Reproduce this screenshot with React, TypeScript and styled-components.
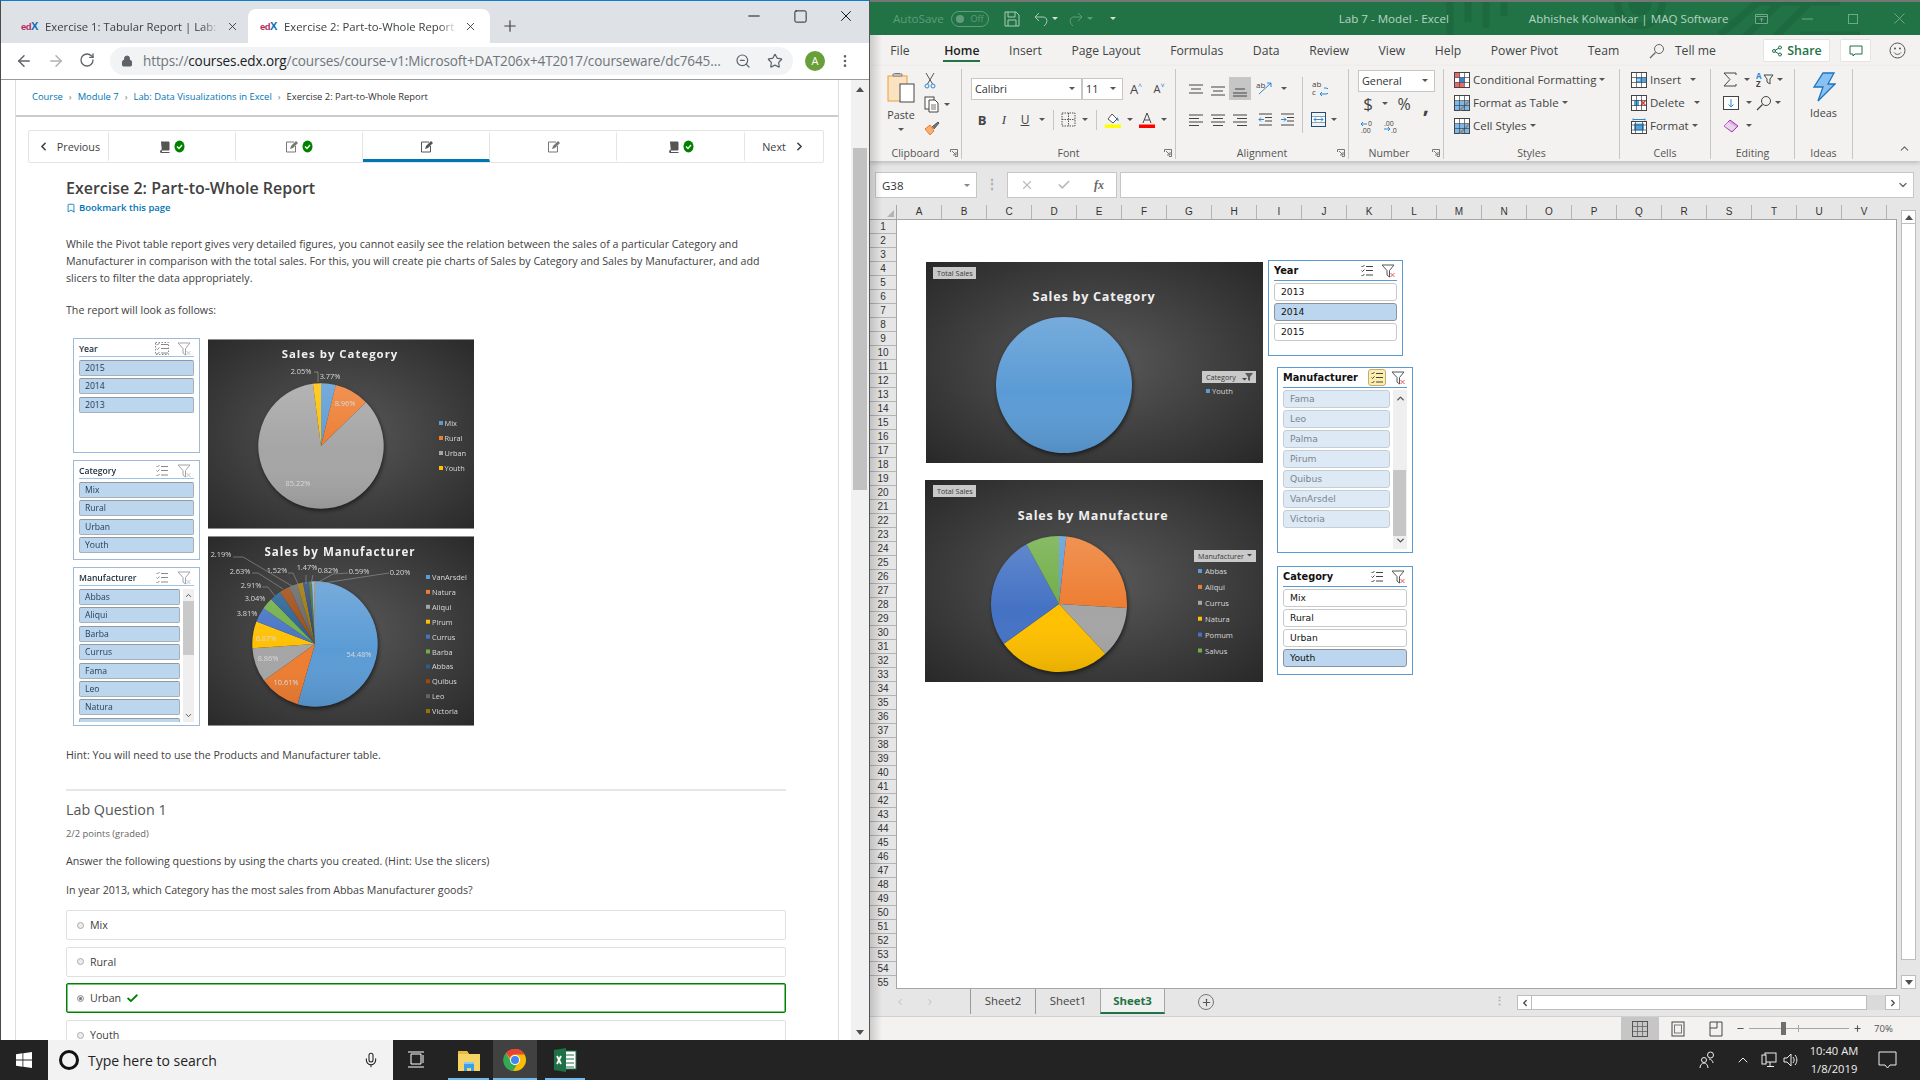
import React from 'react';
import styled, { createGlobalStyle } from 'styled-components';
import { ArrowLeft, ArrowRight, RotateCw, Lock, Star, X, Plus, Minus, Square, MoreVertical, ZoomOut, ChevronLeft, ChevronRight, ChevronUp, ChevronDown, Check, Bookmark, Mic, Share2 } from 'lucide-react';

const Global = createGlobalStyle`
  html, body { margin: 0; padding: 0; width: 1920px; height: 1080px; overflow: hidden; background: #fff; }
  body { font-family: "Open Sans", "Liberation Sans", sans-serif; color: #414141; }
  * { box-sizing: border-box; }
  svg { display: block; flex: none; }
`;

const Desktop = styled.div`
  width: 1920px; height: 1080px; display: grid;
  grid-template-columns: 870px 1050px; grid-template-rows: 1040px 40px; overflow: hidden;
`;

/* ---------- Browser chrome ---------- */
const Browser = styled.section`
  display: flex; flex-direction: column; min-height: 0; overflow: hidden;
  border-top: 1px solid #0a7fd0; border-left: 1px solid #4a4a4a; border-right: 1px solid #555; background: #fff;
`;
const TabStrip = styled.div`
  height: 42px; background: #dee1e6; display: flex; align-items: flex-end; flex: none; color: #333;
`;
const Tab = styled.div<{ $active?: boolean }>`
  width: ${p => (p.$active ? 242 : 247)}px; height: 34px; display: flex; align-items: center;
  padding: 0 ${p => (p.$active ? 13 : 9)}px 0 ${p => (p.$active ? 12 : 20)}px; gap: 7px; border-radius: 8px 8px 0 0;
  background: ${p => (p.$active ? '#fff' : 'transparent')};
`;
const Favicon = styled.span`
  font: 700 9.5px/1 "Liberation Sans", sans-serif; width: 17px; letter-spacing: -.5px; color: #b6275c; flex: none;
  i { font-style: normal; color: #0f6cb5; font-size: 11px; }
`;
const TabTitle = styled.span`
  flex: 1; overflow: hidden; white-space: nowrap; font-size: 11.3px; color: #3c4043;
  -webkit-mask-image: linear-gradient(90deg, #000 90%, transparent 100%);
  mask-image: linear-gradient(90deg, #000 90%, transparent 100%);
`;
const NewTab = styled.span` margin: 0 0 8px 11px; color: #444; `;
const WinButtons = styled.div`
  margin-left: auto; display: flex; align-items: center; align-self: flex-start; padding: 6px 14px 0 0; gap: 29.5px; color: #111;
`;
const Toolbar = styled.div`
  height: 37px; flex: none; display: flex; align-items: center; border-bottom: 1px solid #9a9a9a; padding: 0 13px 1px 14px; background: #fff; color: #5f6368;
`;
const NavIcons = styled.div` display: flex; gap: 14px; width: 95px; `;
const Omnibox = styled.div`
  width: 683px; height: 28px; border-radius: 14px; background: #f1f3f4; display: flex; align-items: center; padding: 0 10px 0 11px; gap: 10px;
`;
const UrlText = styled.span`
  flex: 1; white-space: nowrap; overflow: hidden; font-size: 13.55px; letter-spacing: -.12px; color: #70757a;
  b { font-weight: 400; color: #202124; }
`;
const ZoomSlot = styled.span` margin-right: 6px; display: flex; `;
const Avatar = styled.span`
  width: 20px; height: 20px; border-radius: 50%; background: #689f38; color: #fff; font-size: 11px; display: flex; align-items: center; justify-content: center; margin-left: 12px;
`;
const MenuSlot = styled.span` margin-left: 12px; display: flex; `;

/* ---------- edX page ---------- */
const PageArea = styled.div` flex: 1; display: flex; min-height: 0; overflow: hidden; `;
const PageWrap = styled.div` width: 850px; padding: 0 12px 0 14px; overflow: hidden; flex: none; `;
const Article = styled.div`
  height: 100%; border-left: 1px solid #ddd; border-right: 1px solid #ddd; overflow: hidden; font-size: 10.67px;
`;
const Breadcrumbs = styled.nav`
  height: 37px; border-bottom: 2px solid #ccc; display: flex; align-items: center; padding: 0 0 3px 16px; font-size: 9.4px; color: #0075b4;
  em { font-style: normal; color: #777; margin: 0 6px; }
  strong { font-weight: 400; color: #333; }
`;
const SeqNav = styled.div`
  margin: 13px 14px 0 12px; height: 33px; display: flex; border: 1px solid #e4e4e4; border-radius: 2px;
`;
const SeqCell = styled.div<{ $w: number; $active?: boolean; $gap?: number }>`
  width: ${p => p.$w}px; border-right: 1px solid #e4e4e4; display: flex; align-items: center; justify-content: center; gap: ${p => p.$gap || 4}px; font-size: 10.8px; color: #414141;
  border-top: 3px solid transparent;
  border-bottom: 3px solid ${p => (p.$active ? '#0075b4' : 'transparent')};
  &:last-child { border-right: 0; }
`;
const Prose = styled.div` padding: 0 52px 0 50px; `;
const H1 = styled.h1`
  margin: 13px 0 0; font-size: 16px; line-height: 24px; font-weight: 600; color: #414141;
`;
const BookmarkLink = styled.div`
  margin-top: 1px; display: flex; align-items: center; gap: 3px; font-size: 9.5px; font-weight: 600; line-height: 14px; color: #0075b4;
`;
const P = styled.p<{ $t: number }>`
  margin: ${p => p.$t}px 0 0; line-height: 17px; white-space: pre-line; color: #414141;
`;
const Rule = styled.div` height: 2px; background: #e6e6e6; margin-top: 25px; `;
const H3 = styled.h3` margin: 9px 0 0; font-size: 14.3px; line-height: 20px; font-weight: 400; color: #555; `;
const Points = styled.div` margin-top: 8px; font-size: 9.4px; line-height: 12px; color: #666; `;
const Choices = styled.div` margin-top: 11px; display: flex; flex-direction: column; gap: 6.7px; `;
const Choice = styled.div<{ $ok?: boolean }>`
  height: 30px; flex: none; border: ${p => (p.$ok ? '1px solid #008100' : '1px solid #e0e0e0')}; box-shadow: ${p => (p.$ok ? 'inset 0 0 0 .5px #008100' : 'none')}; border-radius: 2px; display: flex; align-items: center; padding-left: 10px; gap: 6px; font-size: 10.67px; color: #414141;
`;
const Radio = styled.span<{ $on?: boolean }>`
  width: 7px; height: 7px; border-radius: 50%; border: 1px solid #aaa; background: ${p => (p.$on ? '#777' : '#ececec')}; box-shadow: ${p => (p.$on ? 'inset 0 0 0 1px #eee' : 'none')};
`;
const CheckMark = styled.span` margin-left: -1px; display: flex; `;
const PageScroll = styled.div` flex: 1; background: #f1f1f1; display: flex; flex-direction: column; align-items: center; justify-content: space-between; padding: 7px 0 5px; position: relative; `;
const Thumb = styled.div` position: absolute; left: 2px; right: 2px; top: 68px; height: 342px; background: #c1c1c1; `;
const Tri = styled.span<{ $d: 'up' | 'down' }>`
  width: 0; height: 0; border-left: 4px solid transparent; border-right: 4px solid transparent;
  ${p => (p.$d === 'up' ? 'border-bottom: 5px solid #505050;' : 'border-top: 5px solid #505050;')}
`;

/* picture embedded in the lab page */
const Picture = styled.div`
  margin: 19px 0 0 7px; display: grid; grid-template-columns: 127px 266px; column-gap: 8px; filter: blur(.35px); width: 401px;
`;
const PicColumn = styled.div` display: flex; flex-direction: column; gap: 7px; height: 388px; `;
const PicCharts = styled.div` display: flex; flex-direction: column; gap: 7px; padding-top: 1px; `;
const PicSlicer = styled.div<{ $h: number }>`
  height: ${p => p.$h}px; border: 1px solid #9dbbd9; padding: 0 5px; background: #fff; overflow: hidden;
`;
const PicHead = styled.div`
  height: 18px; padding: 2px 2px 0 0; border-bottom: 1px solid #9dc3e6; display: flex; align-items: center; gap: 8px; font-size: 8.6px; font-weight: 600; color: #1c2b39;
`;
const PicTitle = styled.div` flex: 1; `;
const PicBody = styled.div` display: flex; gap: 3px; margin-top: 3px; height: 133px; `;
const PicList = styled.div` flex: 1; display: flex; flex-direction: column; gap: 2.4px; overflow: hidden; `;
const PicItem = styled.div`
  height: 16px; flex: none; background: #bcd6ee; border: 1px solid #a4b0bb; border-top-color: #8e99a3; border-radius: 2px; font-size: 8.6px; line-height: 14px; padding-left: 5px; color: #1d3a55; font-weight: 500;
`;
const PicBar = styled.div`
  width: 11px; background: #efefef; position: relative; display: flex; flex-direction: column; justify-content: space-between; align-items: center; color: #555; padding: 2px 0;
`;
const PicBarThumb = styled.div` position: absolute; left: 0; right: 0; top: 12px; height: 54px; background: #c9c9c9; `;
const PicChartFrame = styled.div`
  width: 266px; height: 190px; background: radial-gradient(ellipse at center, #595959 0%, #2a2a2a 100%); border: 1px solid #8e8e8e; border-width: 1px 0;
`;

/* ---------- Excel ---------- */
const Excel = styled.section`
  position: relative; display: flex; flex-direction: column; min-height: 0; overflow: hidden; background: #e6e6e6;
  &::after { content: ""; position: absolute; left: 0; top: 35px; bottom: 0; width: 12px; background: linear-gradient(90deg, rgba(0,0,0,.16), rgba(0,0,0,0)); pointer-events: none; z-index: 3; }
`;
const TitleBar = styled.div`
  height: 35px; flex: none; background: #217346; border-top: 2px solid #767676; display: flex; align-items: center; position: relative; color: #b7d3c3; font-size: 11.6px; white-space: nowrap; overflow: hidden;
`;
const TitleDecor = styled.svg` position: absolute; right: 60px; top: 0; `;
const TitleItem = styled.div<{ $ml: number; $dim?: boolean }>`
  position: relative; margin-left: ${p => p.$ml}px; display: flex; align-items: center; color: ${p => (p.$dim ? '#5f9c7c' : 'inherit')};
`;
const Toggle = styled.span`
  width: 38px; height: 16px; border: 1px solid #5f9c7c; border-radius: 8px; display: flex; align-items: center; justify-content: space-between; padding: 0 4px 0 4px; font-size: 9px; color: #5f9c7c;
  i { width: 8px; height: 8px; border-radius: 50%; background: #5f9c7c; }
`;
const SmallCaret = styled.span<{ $c?: string; $ml?: number; $mr?: number; $mt?: number }>`
  width: 0; height: 0; flex: none; display: inline-block; margin: ${p => p.$mt || 0}px ${p => p.$mr || 0}px 0 ${p => p.$ml || 0}px;
  border-left: 3px solid transparent; border-right: 3px solid transparent; border-top: 3px solid ${p => p.$c || '#555'};
`;
const TabRow = styled.div`
  height: 31px; flex: none; background: #f3f2f1; display: flex; align-items: stretch; padding-left: 5.5px; font-size: 12.2px; color: #444; position: relative;
`;
const RTab = styled.div<{ $active?: boolean }>`
  display: flex; align-items: center; padding: 0 14.8px; position: relative; white-space: nowrap;
  color: ${p => (p.$active ? '#222' : '#444')}; font-weight: ${p => (p.$active ? 600 : 400)};
  ${p => p.$active && `margin-left: 5px; &::after { content: ""; position: absolute; left: 14px; right: 14px; bottom: 4px; height: 2px; background: #217346; }`}
`;
const TellMe = styled.span` margin-left: 10px; `;
const TabRight = styled.div` margin-left: auto; display: flex; align-items: center; padding-right: 14px; gap: 10px; `;
const ShareBtn = styled.div`
  width: 67px; height: 23px; background: #fff; border: 1px solid #e4e4e4; border-radius: 2px; display: flex; align-items: center; justify-content: center; gap: 4px; color: #217346; font-weight: 600; font-size: 12.4px;
`;
const CommentBtn = styled.div`
  width: 31px; height: 23px; background: #fff; border: 1px solid #e4e4e4; border-radius: 2px; display: flex; align-items: center; justify-content: center; margin-right: 8px;
`;
const Ribbon = styled.div`
  height: 95px; flex: none; background: #f3f2f1; display: flex; padding-top: 3px; box-shadow: 0 2px 4px rgba(0,0,0,.18); position: relative; z-index: 1; font-size: 11.5px; color: #444;
`;
const Group = styled.div<{ $w: number }>`
  width: ${p => p.$w}px; height: 90px; border-right: 1px solid #c8c6c4; flex: none; display: flex; flex-direction: column; position: relative;
`;
const GroupBody = styled.div<{ $pl?: number; $col?: boolean }>`
  height: 78px; flex: none; display: flex; flex-direction: ${p => (p.$col ? 'column' : 'row')}; padding-left: ${p => p.$pl || 0}px;
`;
const GroupLabel = styled.div<{ $pr?: number }>`
  height: 13px; text-align: center; font-size: 10.6px; line-height: 13px; color: #555; padding-right: ${p => p.$pr || 0}px;
`;
const Launcher = styled.svg` position: absolute; right: 3px; bottom: 2px; `;
const RRow = styled.div<{ $h?: number; $t?: number }>`
  display: flex; align-items: center; height: ${p => p.$h || 23}px; margin-top: ${p => p.$t || 0}px; white-space: nowrap;
`;
const Slot = styled.div<{ $w: number; $on?: boolean; $ml?: number }>`
  width: ${p => p.$w}px; height: 23px; flex: none; display: flex; align-items: center; justify-content: center; margin-left: ${p => p.$ml || 0}px; background: ${p => (p.$on ? '#c6c6c6' : 'transparent')};
`;
const VLine = styled.div<{ $h?: number; $m?: number; $t?: number; $l?: number }>`
  width: 1px; height: ${p => p.$h || 20}px; background: #c8c6c4; margin: ${p => p.$t || 0}px ${p => p.$m ?? 4}px 0 ${p => p.$l ?? p.$m ?? 4}px; flex: none;
`;
const FieldBox = styled.div<{ $w: number; $pl?: number }>`
  width: ${p => p.$w}px; height: 22px; background: #fff; border: 1px solid #c8c6c4; display: flex; align-items: center; justify-content: space-between; padding: 0 6px 0 ${p => p.$pl ?? 3}px; font-size: 10.8px; color: #333; flex: none;
`;
const BigLabel = styled.div<{ $t?: number }>` text-align: center; font-size: 10.8px; line-height: 14px; margin-top: ${p => p.$t || 0}px; `;
const StackCol = styled.div<{ $w?: number; $ml?: number; $start?: boolean; $pt?: number }>`
  display: flex; flex-direction: column; align-items: ${p => (p.$start ? 'flex-start' : 'center')}; ${p => (p.$w ? `width: ${p.$w}px;` : '')} margin-left: ${p => p.$ml || 0}px; padding-top: ${p => p.$pt || 0}px; flex: none;
`;
const GrowA = styled.span<{ $s: number }>`
  font-size: ${p => p.$s}px; color: #444;
  sup { font-size: 7px; color: #2b88d8; line-height: 0; }
`;
const GlyphB = styled.b` font-size: 13px; `;
const GlyphI = styled.i` font-size: 13px; font-family: "Liberation Serif", serif; `;
const GlyphU = styled.u` font-size: 12px; `;
const NumGlyph = styled.span<{ $s?: number }>` font-size: ${p => p.$s || 16}px; `;
const CommaGlyph = styled.b` font-size: 22px; line-height: 14px; `;
const StyleRows = styled.div` display: flex; flex-direction: column; margin-top: -1px; `;
const StyleRow = styled.div`
  height: 23px; display: flex; align-items: center; gap: 3px; white-space: nowrap;
`;
const RibbonEnd = styled.div` flex: 1; display: flex; justify-content: flex-end; align-items: flex-end; padding: 0 9px 6px 0; color: #666; `;

const FormulaRow = styled.div`
  height: 44px; flex: none; padding: 11px 6px 0 5px; display: flex; align-items: flex-start; background: #e6e6e6;
`;
const NameBox = styled.div`
  width: 102px; height: 26px; background: #fff; border: 1px solid #c8c6c4; display: flex; align-items: center; justify-content: space-between; padding: 0 6px; font-size: 11.5px; color: #333;
`;
const Dots = styled.div` width: 30px; color: #aaa; text-align: center; font-size: 12px; line-height: 24px; font-weight: 700; `;
const FxBox = styled.div`
  width: 110px; height: 26px; background: #fff; border: 1px solid #c8c6c4; display: flex; align-items: center; justify-content: space-between; padding: 0 12px; margin-right: 3px; color: #bbb;
  i { font: italic 700 12px "Liberation Serif", serif; color: #666; }
`;
const Formula = styled.div`
  flex: 1; height: 26px; background: #fff; border: 1px solid #c8c6c4; display: flex; align-items: center; justify-content: flex-end; padding-right: 4px; color: #666;
`;
const SheetGrid = styled.div`
  flex: 1; display: grid; grid-template-columns: 27px 1000px 23px; grid-template-rows: 15px 1fr; min-height: 0; overflow: hidden; background: #e6e6e6;
`;
const Corner = styled.div` background: #e6e6e6; border-right: 1px solid #a6a6a6; border-bottom: 1px solid #a6a6a6; position: relative;
  &::after { content: ""; position: absolute; right: 2px; bottom: 2px; border-left: 7px solid transparent; border-bottom: 7px solid #b4b4b4; }
`;
const ColHeads = styled.div` display: flex; background: #e6e6e6; border-bottom: 1px solid #a6a6a6; `;
const ColHead = styled.div`
  width: 45px; flex: none; border-right: 1px solid #b4b4b4; text-align: center; font: 10px/14px "Liberation Sans", sans-serif; color: #333;
`;
const RowHeads = styled.div` background: #e6e6e6; border-right: 1px solid #a6a6a6; overflow: hidden; `;
const RowHead = styled.div`
  height: 14px; border-bottom: 1px solid #b4b4b4; text-align: center; font: 10px/13px "Liberation Sans", sans-serif; color: #333;
`;
const Sheet = styled.div` position: relative; background: #fff; border-right: 1px solid #a6a6a6; border-bottom: 1px solid #a6a6a6; `;
const VScroll = styled.div`
  grid-row: 1 / 3; grid-column: 3; padding: 5px 4px 0 4px; display: flex; flex-direction: column; align-items: center;
`;
const ScrollBtn = styled.div`
  width: 15px; height: 14px; background: #fff; border: 1px solid #bdbdbd; display: flex; align-items: center; justify-content: center; flex: none;
`;
const VThumb = styled.div` width: 15px; flex: 1; background: #fff; border: 1px solid #bdbdbd; border-top: 0; margin-bottom: 15px; `;

const ChartBox = styled.div<{ $x: number; $y: number; $w: number; $h: number }>`
  position: absolute; left: ${p => p.$x}px; top: ${p => p.$y}px; width: ${p => p.$w}px; height: ${p => p.$h}px;
  background: radial-gradient(ellipse at center, #5a5a5a 0%, #282828 100%);
`;
const SlicerBox = styled.div<{ $x: number; $y: number; $w: number; $h: number }>`
  position: absolute; left: ${p => p.$x}px; top: ${p => p.$y}px; width: ${p => p.$w}px; height: ${p => p.$h}px;
  border: 1px solid #5b9bd5; background: #fff; padding: 0 5px;
`;
const SlicerHead = styled.div`
  height: 20px; border-bottom: 1px solid #5b9bd5; display: flex; align-items: center; font: 700 9.8px "DejaVu Sans", sans-serif; color: #111;
`;
const SlicerTitle = styled.div` flex: 1; `;
const SlicerBody = styled.div` display: flex; gap: 3px; margin-top: 2px; height: 159px; `;
const SlicerList = styled.div` flex: 1; display: flex; flex-direction: column; gap: 2px; `;
const SlicerItem = styled.div<{ $s?: 'on' | 'dim' }>`
  height: 18px; flex: none; border-radius: 3px; padding-left: 6px; font: 9.2px/16px "DejaVu Sans", sans-serif;
  background: ${p => (p.$s === 'on' ? '#bbd6ee' : p.$s === 'dim' ? '#dde9f4' : '#fff')};
  border: 1px solid ${p => (p.$s === 'on' ? '#8d9499' : p.$s === 'dim' ? '#c5ced6' : '#c9c9c9')};
  color: ${p => (p.$s === 'dim' ? '#7b8690' : '#111')};
`;
const SlicerBar = styled.div`
  width: 14px; background: #efefef; position: relative; display: flex; flex-direction: column; justify-content: space-between; align-items: center; padding: 3px 0; color: #555;
`;
const SlicerBarThumb = styled.div` position: absolute; left: 0; right: 1px; top: 80px; height: 66px; background: #c6c6c6; `;
const IconBtn = styled.span<{ $on?: boolean; $mr?: number }>`
  width: 18px; height: 17px; display: flex; align-items: center; justify-content: center; border-radius: 3px; margin-right: ${p => p.$mr || 0}px;
  ${p => p.$on && 'background: #fdeeae; border: 1px solid #c4ad6e;'}
`;

const SheetBar = styled.div`
  height: 27px; flex: none; background: #e6e6e6; display: flex; align-items: flex-start; font-size: 11.4px; color: #444;
`;
const SheetNav = styled.div` width: 100px; height: 25px; display: flex; align-items: center; gap: 20px; padding-left: 25px; color: #b5b5b5; `;
const SheetTab = styled.div<{ $on?: boolean }>`
  width: 65px; height: 25px; text-align: center; line-height: 24px; border-left: 1px solid ${p => (p.$on ? '#a6a6a6' : '#9a9a9a')};
  ${p => p.$on && 'background: #f0f0f0; color: #217346; font-weight: 700; border-bottom: 2px solid #217346; border-right: 1px solid #a6a6a6;'}
`;
const AddSheet = styled.div`
  width: 16px; height: 16px; margin: 5px 0 0 33px; border: 1px solid #777; border-radius: 50%; color: #555; display: flex; align-items: center; justify-content: center;
`;
const HDots = styled.div` margin-left: 280px; color: #aaa; font-weight: 700; line-height: 23px; width: 23px; `;
const HScroll = styled.div` display: flex; height: 15px; width: 383px; margin-top: 6px; background: #dadada; `;
const HBtn = styled.div` width: 15px; background: #fff; border: 1px solid #bdbdbd; display: flex; align-items: center; justify-content: center; color: #444; `;
const HThumb = styled.div` width: 335px; background: #fff; border: 1px solid #bdbdbd; border-left: 0; `;
const HGap = styled.div` flex: 1; `;
const StatusBar = styled.div`
  height: 24px; flex: none; background: #f3f2f1; border-top: 1px solid #d0d0d0; display: flex; align-items: stretch; justify-content: flex-end; padding-right: 27px; color: #555; font-size: 9.6px;
`;
const ViewBtn = styled.div<{ $on?: boolean; $mr?: number }>`
  width: 38px; display: flex; align-items: center; justify-content: center; margin-right: ${p => p.$mr || 0}px; background: ${p => (p.$on ? '#c6c6c6' : 'transparent')};
`;
const ZoomSign = styled.span` align-self: center; display: flex; `;
const ZoomSlider = styled.div`
  width: 100px; height: 1px; background: #a6a6a6; align-self: center; position: relative; margin: 0 4px;
  &::before { content: ""; position: absolute; left: 32px; top: -6px; width: 5px; height: 13px; background: #6e6e6e; }
  &::after { content: ""; position: absolute; left: 49px; top: -3px; width: 1px; height: 7px; background: #a6a6a6; }
`;
const ZoomPct = styled.div` align-self: center; margin-left: 12px; `;

/* ---------- Taskbar ---------- */
const Taskbar = styled.footer`
  grid-column: 1 / 3; background: #232323; display: flex; align-items: stretch; color: #fff;
`;
const StartBtn = styled.div` width: 48px; display: flex; align-items: center; justify-content: center; `;
const SearchBox = styled.div`
  width: 345px; background: #f2f2f2; display: flex; align-items: center; padding: 0 14px 0 11px; gap: 9px; color: #222; font-size: 14px;
  span { flex: 1; }
`;
const Cortana = styled.i` width: 20px; height: 20px; border: 3px solid #111; border-radius: 50%; `;
const TaskIcon = styled.div<{ $w: number; $on?: boolean; $run?: boolean; $ml?: number }>`
  width: ${p => p.$w}px; margin-left: ${p => p.$ml || 0}px; display: flex; align-items: center; justify-content: center; position: relative;
  background: ${p => (p.$on ? '#414141' : 'transparent')};
  ${p => p.$run && `&::after { content: ""; position: absolute; left: 0; right: 0; bottom: 0; height: 2px; background: #76b9ed; }`}
`;
const Tray = styled.div` margin-left: auto; display: flex; align-items: center; color: #eee; padding-right: 23px; `;
const TrayIcon = styled.div<{ $ml?: number }>` margin-left: ${p => p.$ml || 0}px; display: flex; `;
const Clock = styled.div` width: 60px; margin-left: 5px; text-align: center; font-size: 11.2px; line-height: 18px; `;

/* ---------- Chart helpers ---------- */
const pt = (cx: number, cy: number, r: number, pct: number) => {
  const a = (pct / 100) * 2 * Math.PI;
  return [cx + r * Math.sin(a), cy - r * Math.cos(a)];
};
const arc = (cx: number, cy: number, r: number, a: number, b: number) => {
  const [x1, y1] = pt(cx, cy, r, a);
  const [x2, y2] = pt(cx, cy, r, b);
  if (b - a >= 99.99) return `M${cx} ${cy - r}A${r} ${r} 0 1 1 ${cx - 0.01} ${cy - r}Z`;
  return `M${cx} ${cy}L${x1} ${y1}A${r} ${r} 0 ${b - a > 50 ? 1 : 0} 1 ${x2} ${y2}Z`;
};
const PieGroup = styled.g` filter: drop-shadow(1px 2px 2px rgba(0,0,0,.55)); `;
const Pie = ({ cx, cy, r, slices, id }: { cx: number; cy: number; r: number; slices: [number, string][]; id: string }) => {
  let acc = 0;
  return (
    <PieGroup>
      <defs>
        <linearGradient id={id} x1="0" y1="0" x2="0" y2="1">
          <stop offset="0" stopColor="#fff" stopOpacity=".17" />
          <stop offset=".55" stopColor="#fff" stopOpacity="0" />
          <stop offset="1" stopColor="#000" stopOpacity=".09" />
        </linearGradient>
      </defs>
      {slices.map(([v, c], i) => {
        const d = arc(cx, cy, r, acc, acc + v);
        acc += v;
        return <path key={i} d={d} fill={c} />;
      })}
      <circle cx={cx} cy={cy} r={r} fill={`url(#${id})`} />
    </PieGroup>
  );
};
const T = styled.text<{ $s: number; $c?: string; $w?: number; $ls?: number }>`
  font-family: "Open Sans", "Liberation Sans", sans-serif; font-size: ${p => p.$s}px; fill: ${p => p.$c || '#d9d9d9'};
  font-weight: ${p => p.$w || 400}; letter-spacing: ${p => p.$ls || 0}px; dominant-baseline: central;
`;
const Label = ({ x, y, children, c, s = 7.4 }: any) => <T x={x} y={y} $s={s} $c={c} textAnchor="middle">{children}</T>;
const Legend = ({ x, y, step, items, s = 7.4, tx = 4.5, box = 4 }: any) => (
  <g>
    {items.map(([n, c]: [string, string], i: number) => (
      <g key={n}>
        <rect x={x} y={y + i * step - box / 2} width={box} height={box} fill={c} />
        <T x={x + tx} y={y + i * step} $s={s}>{n}</T>
      </g>
    ))}
  </g>
);

const C = { blue: '#5b9bd5', orange: '#ed7d31', gray: '#a5a5a5', gold: '#ffc000', dblue: '#4472c4', green: '#70ad47', navy: '#255e91', rust: '#9e480e', dgray: '#636363', olive: '#997300' };

const PicCategory = () => (
  <svg width="266" height="188" viewBox="0 0 266 188">
    <T x="132" y="13" $s={11.4} $w={700} $ls={1} $c="#f0f0f0" textAnchor="middle">Sales by Category</T>
    <Pie id="pa" cx={113} cy={106} r={62.7} slices={[[3.77, C.blue], [8.96, C.orange], [85.22, C.gray], [2.05, C.gold]]} />
    <path d="M106 32h4v10" stroke="#aaa" strokeWidth=".6" fill="none" />
    <Label x={93} y={31}>2.05%</Label>
    <Label x={122} y={36}>3.77%</Label>
    <Label x={137} y={63}>8.96%</Label>
    <Label x={90} y={143}>85.22%</Label>
    <Legend x={231} y={83} step={15} tx={5.5} items={[['Mix', C.blue], ['Rural', C.orange], ['Urban', C.gray], ['Youth', C.gold]]} />
  </svg>
);
const PicManufacturer = () => {
  const lines = ['M25 20h10L84 49', 'M44 36h6L75 52', 'M54 50h6L67 59', 'M80 36h5L90 47', 'M98 38v9', 'M105 38l-2 9', 'M140 36L125 37L105 48', 'M181 36L109 47'];
  const labels: [string, number, number][] = [['2.19%', 13, 18], ['2.63%', 32, 35], ['2.91%', 43, 49], ['3.04%', 47, 62], ['3.81%', 39, 77], ['6.87%', 58, 102], ['8.86%', 60, 122], ['10.61%', 78, 146], ['54.48%', 151, 118], ['1.52%', 69, 34], ['1.47%', 99, 31], ['0.82%', 120, 34], ['0.59%', 151, 35], ['0.20%', 192, 36]];
  return (
    <svg width="266" height="188" viewBox="0 0 266 188">
      <T x="132" y="14" $s={11.6} $w={700} $ls={1} $c="#f0f0f0" textAnchor="middle">Sales by Manufacturer</T>
      <Pie id="pb" cx={107} cy={107} r={62.7} slices={[[54.48, C.blue], [10.61, C.orange], [8.86, C.gray], [6.87, C.gold], [3.81, C.dblue], [3.04, C.green], [2.91, C.navy], [2.63, C.rust], [2.19, C.dgray], [1.52, C.olive], [1.47, '#264478'], [0.82, '#43682b'], [0.59, '#7cafdd'], [0.2, '#f1975a']]} />
      {lines.map(d => <path key={d} d={d} stroke="#9a9a9a" strokeWidth=".6" fill="none" />)}
      {labels.map(([t, x, y]) => <Label key={t} x={x} y={y - 1}>{t}</Label>)}
      <Legend x={218} y={40} step={14.9} tx={6} items={[['VanArsdel', C.blue], ['Natura', C.orange], ['Aliqui', C.gray], ['Pirum', C.gold], ['Currus', C.dblue], ['Barba', C.green], ['Abbas', C.navy], ['Quibus', C.rust], ['Leo', C.dgray], ['Victoria', C.olive]]} />
    </svg>
  );
};
const ChartButton = ({ x, y, w, children, filter }: any) => (
  <g>
    <rect x={x} y={y} width={w} height={12} fill="#c9c9c9" />
    <T x={x + 4} y={y + 6} $s={7.2} $c="#3a3a3a">{children}</T>
    {filter === true && <path d={`M${x + w - 11} ${y + 2}h8l-3 4v4l-2-1v-3z`} fill="#5a5a5a" />}
    {filter !== undefined && <path d={`M${x + w - (filter ? 14 : 9)} ${y + (filter ? 7 : 4)}h5l-2.500 2.500z`} fill="#444" />}
  </g>
);
const SheetCategory = () => (
  <svg width="337" height="201" viewBox="0 0 337 201">
    <ChartButton x={7} y={5} w={43}>Total Sales</ChartButton>
    <T x="168" y="34" $s={12.6} $w={700} $ls={.75} $c="#efefef" textAnchor="middle">Sales by Category</T>
    <Pie id="sa" cx={138} cy={123} r={68} slices={[[100, C.blue]]} />
    <ChartButton x={276} y={109} w={54} filter>Category</ChartButton>
    <Legend x={280} y={129} step={0} tx={6} s={7.6} items={[['Youth', C.blue]]} />
  </svg>
);
const SheetManufacturer = () => (
  <svg width="338" height="202" viewBox="0 0 338 202">
    <ChartButton x={8} y={5} w={43}>Total Sales</ChartButton>
    <T x="168" y="35" $s={12.5} $w={700} $ls={.8} $c="#efefef" textAnchor="middle">Sales by Manufacture</T>
    <Pie id="sb" cx={134} cy={124} r={68} slices={[[1.72, C.blue], [24.2, C.orange], [12.15, C.gray], [27, C.gold], [27, C.dblue], [7.93, C.green]]} />
    <ChartButton x={269} y={70} w={62} filter={false}>Manufacturer</ChartButton>
    <Legend x={273} y={91} step={15.9} tx={7} s={7.6} items={[['Abbas', C.blue], ['Aliqui', C.orange], ['Currus', C.gray], ['Natura', C.gold], ['Pomum', C.dblue], ['Salvus', C.green]]} />
  </svg>
);

/* ---------- Small icons ---------- */
const S = ({ w = 16, h = 16, vb, children }: any) => <svg width={w} height={h} viewBox={vb || `0 0 ${w} ${h}`} fill="none">{children}</svg>;
const Lines = ({ ys, xs }: { ys: number[]; xs: [number, number][] }) => (
  <S>{ys.map((y, i) => <path key={i} d={`M${xs[i][0]} ${y}H${xs[i][1]}`} stroke="#444" />)}</S>
);
const BookIco = () => <S w={11} h={12}><path d="M2 1h8v8H3a1.5 1.5 0 0 0 0 3h7v-1H3" fill="#555" stroke="#555" /><path d="M3 10.5h7" stroke="#fff" /></S>;
const EditIco = ({ c = '#777' }: any) => <S w={13} h={13}><path d="M9 2H1.5v10h9V6" stroke={c} /><path d="M5 9l1-3 5-5 2 2-5 5z" fill={c} /></S>;
const Ok = () => <S w={11} h={13}><ellipse cx="5.5" cy="6.5" rx="5" ry="6" fill="#008100" /><path d="M3 6.5l2 2 3-3.5" stroke="#fff" strokeWidth="1.3" /></S>;
const MultiIco = ({ c = '#444', dotted }: any) => (
  <S w={14} h={13}>
    {dotted && <rect x=".5" y=".5" width="13" height="12" stroke={c} strokeDasharray="1.5 1.5" />}
    <path d="M1.5 2l1 1 2-2M1.5 6.500l1 1 2-2M1.500 11l1 1 2-2" stroke={c} />
    <path d="M6 2.500h7M6 6.500h7M6 11h7" stroke={c} />
  </S>
);
const ClearIco = ({ c = '#555', x = '#e55' }: any) => (
  <S w={15} h={14}><path d="M1 1h12L8.500 6.500V13L6 11V6.500z" stroke={c} /><path d="M9.500 9l4 4M13.500 9l-4 4" stroke={x} /></S>
);
const PasteIco = () => (
  <S w={28} h={31}>
    <rect x="1" y="4" width="19" height="25" fill="#fbe3c2" stroke="#ed9c3f" />
    <path d="M6 4h9V2H6zM8 1.500h5" stroke="#777" fill="#fff" />
    <rect x="13" y="12" width="14" height="18" fill="#fff" stroke="#444" />
  </S>
);
const ScissorIco = () => (
  <S w={12} h={17}><path d="M2 1l6.500 11M10 1L3.500 12" stroke="#555" /><circle cx="3" cy="14" r="2" stroke="#2b88d8" /><circle cx="9" cy="14" r="2" stroke="#2b88d8" /></S>
);
const CopyIco = () => (
  <S w={16} h={17}><rect x="1" y="1" width="9" height="12" fill="#fff" stroke="#444" /><path d="M5 4h6l3 3v9H5z" fill="#fff" stroke="#444" /><path d="M7 9h5M7 11h5M7 13h5" stroke="#777" /></S>
);
const BrushIco = () => (
  <S w={16} h={16}><path d="M1 9l5-4 4 6-4 4z" fill="#f7b076" stroke="#e87f27" /><path d="M8 7l6-5 1 1-5 6" fill="#777" stroke="#555" /></S>
);
const BorderIco = () => <S w={15} h={15}><path d="M1 1h13v13H1zM7.500 1v13M1 7.500h13" stroke="#555" strokeDasharray="1.500 1" /></S>;
const FillIco = () => (
  <S w={16} h={16}><path d="M3 7l4-5 5 5-4 4z" fill="#fff" stroke="#555" /><path d="M12 5c2 2 2 4 1 4s-1-2-1-4z" fill="#2b88d8" /><rect y="12.500" width="16" height="3.500" fill="#ffff00" /></S>
);
const ColorA = () => <S w={16} h={16}><path d="M4 11L8 1l4 10M5.500 8h5" stroke="#444" /><rect y="12.500" width="16" height="3.500" fill="#f00" /></S>;
const OrientIco = () => <S w={18} h={16}><path d="M3 13L15 2M11 2h4v4" stroke="#2b88d8" /><text x="0" y="7" fontSize="8" fill="#444" fontFamily="Open Sans">ab</text></S>;
const IndentIco = ({ rev }: any) => (
  <S w={15} h={13}><path d="M1 1h13M7 4.500h7M7 8h7M1 12h13" stroke="#444" /><path d={rev ? 'M6 6.500H1M3 4.500L1 6.500l2 2' : 'M1 6.500h5M4 4.500l2 2-2 2'} stroke="#2b88d8" /></S>
);
const WrapIco = () => (
  <S w={17} h={17}><path d="M13 8h2a2.500 2.500 0 0 1 0 6H9M11 12l-2 2 2 2" stroke="#2b88d8" /><text x="1" y="7" fontSize="8" fill="#444" fontFamily="Open Sans">ab</text><text x="1" y="15" fontSize="8" fill="#444" fontFamily="Open Sans">c</text></S>
);
const MergeIco = () => (
  <S w={15} h={15}><rect x=".5" y=".5" width="14" height="14" stroke="#1f4e79" /><path d="M.5 5h14M.5 10h14" stroke="#1f4e79" /><rect x="1" y="5" width="13" height="5" fill="#fff" /><path d="M3 7.500h9M5 5.500l-2 2 2 2M10 5.500l2 2-2 2" stroke="#2b88d8" /></S>
);
const DecIco = ({ up }: any) => (
  <S w={18} h={15}><text x={up ? 1 : 8} y="6" fontSize="7" fill="#444" fontFamily="Open Sans">{up ? '.00' : '0'}</text><text x={up ? 8 : 1} y="13" fontSize="7" fill="#444" fontFamily="Open Sans">{up ? '.0' : '.00'}</text><path d={up ? 'M1 9h6M5 7l2 2-2 2' : 'M7 4H1M3 2L1 4l2 2'} stroke="#2b88d8" /></S>
);
const Grid16 = ({ children }: any) => (
  <S>
    <rect x=".5" y=".5" width="15" height="15" fill="#fff" stroke="#444" />
    {children}
    <path d="M.5 5.500h15M.5 10.500h15M5.500 .5v15M10.500 .5v15" stroke="#444" strokeWidth=".7" />
  </S>
);
const CondIco = () => <Grid16><rect x="1" y="1" width="4.500" height="4.500" fill="#e66" /><rect x="1" y="10.500" width="9" height="4.500" fill="#e66" /><rect x="5.500" y="5.500" width="5" height="5" fill="#2b88d8" /></Grid16>;
const TableIco = () => <Grid16><rect x="1" y="6" width="14" height="9" fill="#7ab9ee" /><path d="M5 15l9-9 1 1-8 9z" fill="#888" /></Grid16>;
const InsIco = () => <Grid16><rect x="5" y="5.500" width="10" height="5" fill="#4aa3e6" /><path d="M9 8H2M4 6L2 8l2 2" stroke="#fff" /></Grid16>;
const DelIco = () => <Grid16><rect x="3" y="5" width="5" height="6" fill="#4aa3e6" /><path d="M10 5.500l4.500 5M14.500 5.500l-4.500 5" stroke="#e33" strokeWidth="1.300" /></Grid16>;
const FmtIco = () => <S><path d="M2 1.500h12M2 .5v2M14 .5v2" stroke="#2b88d8" /><rect x=".5" y="3.500" width="15" height="12" fill="#fff" stroke="#444" /><rect x="3" y="5.500" width="10" height="7" fill="#4aa3e6" /><path d="M.5 7h15M.5 12h15M4.500 3.500v12M11.500 3.500v12" stroke="#444" strokeWidth=".7" /></S>;
const SigmaIco = () => <S w={14} h={15}><path d="M13 3V1H1l6 6.500L1 14h12v-2" stroke="#444" /></S>;
const SortIco = () => (
  <S w={18} h={17}><text x="0" y="8" fontSize="8" fontWeight="700" fill="#2b88d8" fontFamily="Open Sans">A</text><text x="0" y="16" fontSize="8" fontWeight="700" fill="#444" fontFamily="Open Sans">Z</text><path d="M8 4h9l-3 4v5l-3-2V8z" stroke="#444" /></S>
);
const FillDownIco = () => <S w={16} h={14}><rect x=".5" y=".5" width="15" height="13" fill="#fff" stroke="#444" /><path d="M8 3v8M5.500 8.500L8 11l2.500-2.500" stroke="#2b88d8" /></S>;
const MagnifyIco = ({ c = '#444' }: any) => <S><circle cx="10" cy="6" r="4.500" stroke={c} /><path d="M6.500 9.500L1 15" stroke={c} strokeWidth="1.300" /></S>;
const EraserIco = () => <S w={16} h={14}><path d="M1 7l6-6 8 6-6 6z" fill="#d9a9df" stroke="#9b3fa5" /><path d="M1 7l4-4 8 5-4 4z" fill="#fff" opacity=".5" /></S>;
const BoltIco = () => (
  <svg width="24" height="30" viewBox="0 0 24 30"><path d="M11 1h11l-6 11h7L6 29l5-14H2z" fill="#8ac1ef" stroke="#1b75c4" strokeWidth="1.300" /></svg>
);
const LaunchIco = () => <Launcher width="8" height="8" viewBox="0 0 8 8" fill="none"><path d="M.5 3V.5H7.500V7.500H5M2 2l4 4M3 6h3V3" stroke="#777" /></Launcher>;
const SaveIco = () => <S><path d="M1 1h11l3 3v11H1z" stroke="#a8cdb7" /><path d="M4 1v5h7V1M4 15v-6h8v6" stroke="#a8cdb7" /></S>;
const UndoIco = ({ c = '#a8cdb7', flip }: any) => <S><path d={flip ? 'M14 6H6c-5 0-5 6-1 9M14 6l-4-4M14 6l-4 4' : 'M2 6h8c5 0 5 6 1 9M2 6l4-4M2 6l4 4'} stroke={c} /></S>;
const WinLogo = () => <svg width="16" height="16" viewBox="0 0 16 16"><path d="M0 2.200l6.500-.9v6.300H0zM7.300 1.200L16 0v7.600H7.300zM0 8.400h6.500v6.300L0 13.800zM7.300 8.400H16V16l-8.700-1.200z" fill="#fff" /></svg>;
const ChromeLogo = () => (
  <svg width="24" height="24" viewBox="0 0 24 24">
    <circle cx="12" cy="12" r="11" fill="#fbbc05" />
    <path d="M12 1a11 11 0 0 1 9.500 5.500H12a5.500 5.500 0 0 0-5.200 3.600L3 4.800A11 11 0 0 1 12 1z" fill="#ea4335" />
    <path d="M3 4.800l4.700 8.500a5.500 5.500 0 0 0 6 3.900L9.800 23A11 11 0 0 1 3 4.800z" fill="#34a853" />
    <circle cx="12" cy="12" r="5" fill="#fff" /><circle cx="12" cy="12" r="4" fill="#4285f4" />
  </svg>
);
const FolderLogo = () => (
  <svg width="24" height="24" viewBox="0 0 24 24"><path d="M1 3h9l2 3h11v17H1z" fill="#f6d365" /><path d="M1 3h9l2 3H1z" fill="#e8b93a" /><path d="M7 16h10v7h-3v-3h-4v3H7z" fill="#3aa0e8" /><rect x="7" y="14" width="10" height="2" fill="#8fc8ee" /></svg>
);
const ExcelLogo = () => (
  <svg width="24" height="24" viewBox="0 0 24 24"><rect x="8" y="3" width="15" height="18" fill="#fff" stroke="#1e7145" /><path d="M12 7h9M12 11h9M12 15h9M12 19h9" stroke="#1e7145" /><path d="M1 2l12-2v24L1 22z" fill="#1e7145" /><path d="M4 8l4 8M8 8l-4 8" stroke="#fff" strokeWidth="1.800" /></svg>
);
const TaskViewIco = () => <S w={18} h={18}><path d="M4 3h10v10H4zM1 1h16M1 16h16M16 4v8" stroke="#fff" /></S>;
const PeopleIco = () => <S w={16} h={18}><circle cx="11.500" cy="4" r="3" stroke="#eee" /><circle cx="5" cy="9" r="2.500" stroke="#eee" /><path d="M1 17c0-3 2-5 4-5s4 2 4 5M10 8c2 0 4 2 4 4" stroke="#eee" /></S>;
const NetIco = () => <S w={16} h={16}><rect x="4" y="1" width="11" height="9" stroke="#eee" /><rect x="1" y="3" width="4" height="9" fill="#232323" stroke="#eee" /><path d="M9 10v4M6 14.500h7" stroke="#eee" /></S>;
const SpeakerIco = () => <S w={16} h={16}><path d="M1 6h3l4-4v12l-4-4H1zM10 5c1.500 2 1.500 4 0 6M12 3c2.500 3 2.500 7 0 10" stroke="#eee" /></S>;
const NoteIco = () => <S w={19} h={19}><path d="M1 1h17v13h-6l-2.500 3-2.500-3H1z" stroke="#eee" /></S>;
const PageViewIco = () => <S><rect x="2" y="1" width="12" height="14" stroke="#444" /><rect x="4.500" y="4" width="7" height="8" stroke="#777" /></S>;
const BreakIco = () => <S><path d="M2 15V1h12v14M9 1v6H2M14 15H2" stroke="#444" /></S>;
const NormalIco = () => <S><rect x=".5" y=".5" width="15" height="15" stroke="#555" /><path d="M.5 5.500h15M.5 10.500h15M5.500 .5v15M10.500 .5v15" stroke="#555" strokeWidth=".7" /></S>;

const PicHeadIcons = ({ dotted }: any) => (
  <>
    <MultiIco c="#8a8a8a" dotted={dotted} />
    <ClearIco c="#a3a3a3" x="#c4c4c4" />
  </>
);

const cols = 'ABCDEFGHIJKLMNOPQRSTUV'.split('');
const rows = Array.from({ length: 55 }, (_, i) => i + 1);

const TitleBarDecor = () => (
  <TitleDecor width="420" height="33" viewBox="0 0 420 33" fill="none" stroke="#1d6a40" strokeWidth="7">
    <path d="M10 0v33M28 0v20M46 0v26M64 0v14" />
    <circle cx="200" cy="2" r="22" />
    <circle cx="200" cy="2" r="8" fill="#1d6a40" />
    <path d="M280 33L330 -10M300 40L350 -10M330 40L380 -10M320 0h80M360 33h60" />
  </TitleDecor>
);

export default function App() {
  return (
    <Desktop>
      <Global />
      <Browser>
        <TabStrip>
          <Tab>
            <Favicon>ed<i>X</i></Favicon>
            <TabTitle>Exercise 1: Tabular Report | Lab: D</TabTitle>
            <X size={13} strokeWidth={1.6} />
          </Tab>
          <Tab $active>
            <Favicon>ed<i>X</i></Favicon>
            <TabTitle>Exercise 2: Part-to-Whole Report</TabTitle>
            <X size={13} strokeWidth={1.6} />
          </Tab>
          <NewTab><Plus size={18} strokeWidth={1.6} /></NewTab>
          <WinButtons>
            <Minus size={18} strokeWidth={1.3} />
            <Square size={15} strokeWidth={1.4} />
            <X size={18} strokeWidth={1.3} />
          </WinButtons>
        </TabStrip>
        <Toolbar>
          <NavIcons>
            <ArrowLeft size={18} strokeWidth={2} />
            <ArrowRight size={18} strokeWidth={2} color="#b0b3b6" />
            <RotateCw size={16} strokeWidth={2} />
          </NavIcons>
          <Omnibox>
            <Lock size={12} fill="#5f6368" strokeWidth={2} />
            <UrlText>https://<b>courses.edx.org</b>/courses/course-v1:Microsoft+DAT206x+4T2017/courseware/dc7645...</UrlText>
            <ZoomSlot><ZoomOut size={16} strokeWidth={1.8} /></ZoomSlot>
            <Star size={16} strokeWidth={1.8} />
          </Omnibox>
          <Avatar>A</Avatar>
          <MenuSlot><MoreVertical size={16} /></MenuSlot>
        </Toolbar>
        <PageArea>
          <PageWrap>
            <Article>
              <Breadcrumbs>
                <span>Course</span><em>›</em><span>Module 7</span><em>›</em><span>Lab: Data Visualizations in Excel</span><em>›</em><strong>Exercise 2: Part-to-Whole Report</strong>
              </Breadcrumbs>
              <SeqNav>
                <SeqCell $w={80} $gap={7}><ChevronLeft size={13} strokeWidth={3} /><span>Previous</span></SeqCell>
                <SeqCell $w={127}><BookIco /><Ok /></SeqCell>
                <SeqCell $w={127}><EditIco /><Ok /></SeqCell>
                <SeqCell $w={128} $active><EditIco c="#555" /></SeqCell>
                <SeqCell $w={127}><EditIco /></SeqCell>
                <SeqCell $w={128}><BookIco /><Ok /></SeqCell>
                <SeqCell $w={78} $gap={7}><span>Next</span><ChevronRight size={13} strokeWidth={3} /></SeqCell>
              </SeqNav>
              <Prose>
                <H1>Exercise 2: Part-to-Whole Report</H1>
                <BookmarkLink><Bookmark size={10} strokeWidth={2} /> Bookmark this page</BookmarkLink>
                <P $t={21}>{'While the Pivot table report gives very detailed figures, you cannot easily see the relation between the sales of a particular Category and\nManufacturer in comparison with the total sales. For this, you will create pie charts of Sales by Category and Sales by Manufacturer, and add\nslicers to filter the data appropriately.'}</P>
                <P $t={15}>The report will look as follows:</P>
                <Picture>
                  <PicColumn>
                    <PicSlicer $h={115}>
                      <PicHead><PicTitle>Year</PicTitle><PicHeadIcons dotted /></PicHead>
                      <PicBody><PicList>
                        <PicItem>2015</PicItem><PicItem>2014</PicItem><PicItem>2013</PicItem>
                      </PicList></PicBody>
                    </PicSlicer>
                    <PicSlicer $h={100}>
                      <PicHead><PicTitle>Category</PicTitle><PicHeadIcons /></PicHead>
                      <PicBody><PicList>
                        <PicItem>Mix</PicItem><PicItem>Rural</PicItem><PicItem>Urban</PicItem><PicItem>Youth</PicItem>
                      </PicList></PicBody>
                    </PicSlicer>
                    <PicSlicer $h={159}>
                      <PicHead><PicTitle>Manufacturer</PicTitle><PicHeadIcons /></PicHead>
                      <PicBody>
                        <PicList>
                          {['Abbas', 'Aliqui', 'Barba', 'Currus', 'Fama', 'Leo', 'Natura', ''].map(n => <PicItem key={n}>{n}</PicItem>)}
                        </PicList>
                        <PicBar>
                          <PicBarThumb />
                          <ChevronUp size={9} strokeWidth={2.5} />
                          <ChevronDown size={9} strokeWidth={2.5} />
                        </PicBar>
                      </PicBody>
                    </PicSlicer>
                  </PicColumn>
                  <PicCharts>
                    <PicChartFrame><PicCategory /></PicChartFrame>
                    <PicChartFrame><PicManufacturer /></PicChartFrame>
                  </PicCharts>
                </Picture>
                <P $t={21}>Hint: You will need to use the Products and Manufacturer table.</P>
                <Rule />
                <H3>Lab Question 1</H3>
                <Points>2/2 points (graded)</Points>
                <P $t={13}>Answer the following questions by using the charts you created. (Hint: Use the slicers)</P>
                <P $t={12}>In year 2013, which Category has the most sales from Abbas Manufacturer goods?</P>
                <Choices>
                  <Choice><Radio /><span>Mix</span></Choice>
                  <Choice><Radio /><span>Rural</span></Choice>
                  <Choice $ok><Radio $on /><span>Urban</span><CheckMark><Check size={13} strokeWidth={3.4} color="#008100" /></CheckMark></Choice>
                  <Choice><Radio /><span>Youth</span></Choice>
                </Choices>
              </Prose>
            </Article>
          </PageWrap>
          <PageScroll>
            <Thumb />
            <Tri $d="up" />
            <Tri $d="down" />
          </PageScroll>
        </PageArea>
      </Browser>

      <Excel>
        <TitleBar>
          <TitleBarDecor />
          <TitleItem $ml={23} $dim>AutoSave</TitleItem>
          <TitleItem $ml={7}><Toggle><i /><span>Off</span></Toggle></TitleItem>
          <TitleItem $ml={15}><SaveIco /></TitleItem>
          <TitleItem $ml={13}><UndoIco /></TitleItem>
          <TitleItem $ml={3}><SmallCaret $c="#cfe2d7" /></TitleItem>
          <TitleItem $ml={10}><UndoIco flip c="#5f9c7c" /></TitleItem>
          <TitleItem $ml={3}><SmallCaret $c="#5f9c7c" /></TitleItem>
          <TitleItem $ml={17}><SmallCaret $c="#cfe2d7" /></TitleItem>
          <TitleItem $ml={223}>Lab 7 - Model  -  Excel</TitleItem>
          <TitleItem $ml={80}>Abhishek Kolwankar | MAQ Software</TitleItem>
          <TitleItem $ml={26}><S w={13} h={10}><path d="M.5.5h12v9H.5zM.5 2.500h12M6.500 8V4.500M4.500 6l2-2 2 2" stroke="#6fa88a" /></S></TitleItem>
          <TitleItem $ml={34}><S w={11} h={2}><path d="M0 1h11" stroke="#6fa88a" /></S></TitleItem>
          <TitleItem $ml={35}><S w={10} h={10}><rect x=".5" y=".5" width="9" height="9" stroke="#6fa88a" /></S></TitleItem>
          <TitleItem $ml={36}><S w={11} h={11}><path d="M.5.5l10 10M10.500.5l-10 10" stroke="#6fa88a" /></S></TitleItem>
        </TitleBar>
        <TabRow>
          <RTab>File</RTab>
          <RTab $active>Home</RTab>
          {['Insert', 'Page Layout', 'Formulas', 'Data', 'Review', 'View', 'Help', 'Power Pivot', 'Team'].map(t => <RTab key={t}>{t}</RTab>)}
          <RTab><MagnifyIco c="#666" /><TellMe>Tell me</TellMe></RTab>
          <TabRight>
            <ShareBtn><Share2 size={12} strokeWidth={2} /> Share</ShareBtn>
            <CommentBtn><S w={14} h={12}><path d="M1 1h12v8H6l-2 2V9H1z" stroke="#217346" /></S></CommentBtn>
            <S w={17} h={17}><circle cx="8.500" cy="8.500" r="7.500" stroke="#555" /><circle cx="6" cy="6.500" r="1" fill="#555" /><circle cx="11" cy="6.500" r="1" fill="#555" /><path d="M5 10.500c2 2.500 5 2.500 7 0" stroke="#555" /></S>
          </TabRight>
        </TabRow>
        <Ribbon>
          <Group $w={92}>
            <GroupBody $pl={16}>
              <StackCol $w={30} $pt={3}>
                <PasteIco />
                <BigLabel $t={5}>Paste</BigLabel>
                <SmallCaret $mt={6} />
              </StackCol>
              <StackCol $start $ml={8} $pt={3}>
                <ScissorIco />
                <RRow $t={6} $h={18}><CopyIco /><SmallCaret $ml={4} /></RRow>
                <RRow $t={6} $h={18}><BrushIco /></RRow>
              </StackCol>
            </GroupBody>
            <GroupLabel>Clipboard</GroupLabel>
            <LaunchIco />
          </Group>
          <Group $w={214}>
            <GroupBody $pl={9} $col>
              <RRow $t={8}>
                <FieldBox $w={111}>Calibri<SmallCaret /></FieldBox>
                <FieldBox $w={41}>11<SmallCaret /></FieldBox>
                <Slot $w={26}><GrowA $s={13}>A<sup>^</sup></GrowA></Slot>
                <Slot $w={20}><GrowA $s={11}>A<sup>˅</sup></GrowA></Slot>
              </RRow>
              <RRow $t={8}>
                <Slot $w={22}><GlyphB>B</GlyphB></Slot>
                <Slot $w={22}><GlyphI>I</GlyphI></Slot>
                <Slot $w={20}><GlyphU>U</GlyphU></Slot>
                <Slot $w={14}><SmallCaret /></Slot>
                <VLine />
                <Slot $w={20}><BorderIco /></Slot>
                <Slot $w={14}><SmallCaret /></Slot>
                <VLine />
                <Slot $w={24}><FillIco /></Slot>
                <Slot $w={10}><SmallCaret /></Slot>
                <Slot $w={20} $ml={2}><ColorA /></Slot>
                <Slot $w={14}><SmallCaret /></Slot>
              </RRow>
            </GroupBody>
            <GroupLabel>Font</GroupLabel>
            <LaunchIco />
          </Group>
          <Group $w={173}>
            <GroupBody $pl={9}>
              <StackCol $start>
                <RRow $t={8}>
                  <Slot $w={22}><Lines ys={[4, 8, 12]} xs={[[1, 15], [3, 13], [1, 15]]} /></Slot>
                  <Slot $w={22}><Lines ys={[6, 10, 14]} xs={[[1, 15], [3, 13], [1, 15]]} /></Slot>
                  <Slot $w={22} $on><Lines ys={[8, 12, 15]} xs={[[3, 13], [1, 15], [1, 15]]} /></Slot>
                  <Slot $w={28}><OrientIco /></Slot>
                  <Slot $w={10}><SmallCaret /></Slot>
                </RRow>
                <RRow $t={8}>
                  <Slot $w={22}><Lines ys={[3, 6.5, 10, 13.5]} xs={[[1, 15], [1, 11], [1, 15], [1, 11]]} /></Slot>
                  <Slot $w={22}><Lines ys={[3, 6.5, 10, 13.5]} xs={[[1, 15], [3, 13], [1, 15], [3, 13]]} /></Slot>
                  <Slot $w={22}><Lines ys={[3, 6.5, 10, 13.5]} xs={[[1, 15], [5, 15], [1, 15], [5, 15]]} /></Slot>
                  <Slot $w={3} />
                  <Slot $w={22}><IndentIco rev /></Slot>
                  <Slot $w={22}><IndentIco /></Slot>
                </RRow>
              </StackCol>
              <VLine $h={56} $m={5} $t={8} $l={4} />
              <StackCol $start>
                <RRow $t={8}><Slot $w={22}><WrapIco /></Slot></RRow>
                <RRow $t={8}><Slot $w={20}><MergeIco /></Slot><Slot $w={12}><SmallCaret /></Slot></RRow>
              </StackCol>
            </GroupBody>
            <GroupLabel>Alignment</GroupLabel>
            <LaunchIco />
          </Group>
          <Group $w={95}>
            <GroupBody $pl={9} $col>
              <RRow>
                <FieldBox $w={77}>General<SmallCaret /></FieldBox>
              </RRow>
              <RRow>
                <Slot $w={20}><NumGlyph $s={17}>$</NumGlyph></Slot>
                <Slot $w={14}><SmallCaret /></Slot>
                <Slot $w={24}><NumGlyph>%</NumGlyph></Slot>
                <Slot $w={20}><CommaGlyph>,</CommaGlyph></Slot>
              </RRow>
              <RRow $t={1}>
                <Slot $w={22}><DecIco /></Slot>
                <Slot $w={24}><DecIco up /></Slot>
              </RRow>
            </GroupBody>
            <GroupLabel $pr={14}>Number</GroupLabel>
            <LaunchIco />
          </Group>
          <Group $w={176}>
            <GroupBody $pl={10} $col>
              <StyleRows>
                <StyleRow><CondIco />Conditional Formatting<SmallCaret /></StyleRow>
                <StyleRow><TableIco />Format as Table<SmallCaret /></StyleRow>
                <StyleRow><TableIco />Cell Styles<SmallCaret /></StyleRow>
              </StyleRows>
            </GroupBody>
            <GroupLabel>Styles</GroupLabel>
          </Group>
          <Group $w={91}>
            <GroupBody $pl={11} $col>
              <StyleRows>
                <StyleRow><InsIco />Insert<SmallCaret $ml={6} /></StyleRow>
                <StyleRow><DelIco />Delete<SmallCaret $ml={6} /></StyleRow>
                <StyleRow><FmtIco />Format<SmallCaret /></StyleRow>
              </StyleRows>
            </GroupBody>
            <GroupLabel>Cells</GroupLabel>
          </Group>
          <Group $w={84}>
            <GroupBody $pl={12} $col>
              <StyleRows>
                <StyleRow><SigmaIco /><SmallCaret $ml={4} $mr={3} /><SortIco /><SmallCaret /></StyleRow>
                <StyleRow><FillDownIco /><SmallCaret $ml={4} $mr={1} /><MagnifyIco /><SmallCaret /></StyleRow>
                <StyleRow><EraserIco /><SmallCaret $ml={4} /></StyleRow>
              </StyleRows>
            </GroupBody>
            <GroupLabel>Editing</GroupLabel>
          </Group>
          <Group $w={58}>
            <GroupBody $col>
              <StackCol $pt={3}>
                <BoltIco />
                <BigLabel $t={4}>Ideas</BigLabel>
              </StackCol>
            </GroupBody>
            <GroupLabel>Ideas</GroupLabel>
          </Group>
          <RibbonEnd><ChevronUp size={13} strokeWidth={2} /></RibbonEnd>
        </Ribbon>
        <FormulaRow>
          <NameBox>G38<SmallCaret $c="#888" /></NameBox>
          <Dots>⋮</Dots>
          <FxBox><X size={14} strokeWidth={2} /><Check size={14} strokeWidth={3} /><i>fx</i></FxBox>
          <Formula><ChevronDown size={12} strokeWidth={2.5} /></Formula>
        </FormulaRow>
        <SheetGrid>
          <Corner />
          <ColHeads>{cols.map(c => <ColHead key={c}>{c}</ColHead>)}</ColHeads>
          <VScroll>
            <ScrollBtn><Tri $d="up" /></ScrollBtn>
            <VThumb />
            <ScrollBtn><Tri $d="down" /></ScrollBtn>
          </VScroll>
          <RowHeads>{rows.map(r => <RowHead key={r}>{r}</RowHead>)}</RowHeads>
          <Sheet>
            <ChartBox $x={29} $y={42} $w={337} $h={201}><SheetCategory /></ChartBox>
            <ChartBox $x={28} $y={260} $w={338} $h={202}><SheetManufacturer /></ChartBox>
            <SlicerBox $x={371} $y={40} $w={135} $h={96}>
              <SlicerHead><SlicerTitle>Year</SlicerTitle><IconBtn $mr={3}><MultiIco /></IconBtn><IconBtn><ClearIco /></IconBtn></SlicerHead>
              <SlicerBody><SlicerList>
                <SlicerItem>2013</SlicerItem><SlicerItem $s="on">2014</SlicerItem><SlicerItem>2015</SlicerItem>
              </SlicerList></SlicerBody>
            </SlicerBox>
            <SlicerBox $x={380} $y={147} $w={136} $h={186}>
              <SlicerHead><SlicerTitle>Manufacturer</SlicerTitle><IconBtn $on $mr={3}><MultiIco /></IconBtn><IconBtn><ClearIco /></IconBtn></SlicerHead>
              <SlicerBody>
                <SlicerList>
                  {['Fama', 'Leo', 'Palma', 'Pirum', 'Quibus', 'VanArsdel', 'Victoria'].map(n => <SlicerItem key={n} $s="dim">{n}</SlicerItem>)}
                </SlicerList>
                <SlicerBar>
                  <SlicerBarThumb />
                  <ChevronUp size={11} strokeWidth={3} />
                  <ChevronDown size={11} strokeWidth={3} />
                </SlicerBar>
              </SlicerBody>
            </SlicerBox>
            <SlicerBox $x={380} $y={346} $w={136} $h={109}>
              <SlicerHead><SlicerTitle>Category</SlicerTitle><IconBtn $mr={3}><MultiIco /></IconBtn><IconBtn><ClearIco /></IconBtn></SlicerHead>
              <SlicerBody><SlicerList>
                <SlicerItem>Mix</SlicerItem><SlicerItem>Rural</SlicerItem><SlicerItem>Urban</SlicerItem><SlicerItem $s="on">Youth</SlicerItem>
              </SlicerList></SlicerBody>
            </SlicerBox>
          </Sheet>
        </SheetGrid>
        <SheetBar>
          <SheetNav><ChevronLeft size={10} strokeWidth={2} /><ChevronRight size={10} strokeWidth={2} /></SheetNav>
          <SheetTab>Sheet2</SheetTab>
          <SheetTab>Sheet1</SheetTab>
          <SheetTab $on>Sheet3</SheetTab>
          <AddSheet><Plus size={11} strokeWidth={2.5} /></AddSheet>
          <HDots>⋮</HDots>
          <HScroll>
            <HBtn><ChevronLeft size={10} strokeWidth={3} /></HBtn>
            <HThumb />
            <HGap />
            <HBtn><ChevronRight size={10} strokeWidth={3} /></HBtn>
          </HScroll>
        </SheetBar>
        <StatusBar>
          <ViewBtn $on><NormalIco /></ViewBtn>
          <ViewBtn><PageViewIco /></ViewBtn>
          <ViewBtn $mr={1}><BreakIco /></ViewBtn>
          <ZoomSign><Minus size={9} strokeWidth={3} /></ZoomSign>
          <ZoomSlider />
          <ZoomSign><Plus size={9} strokeWidth={3} /></ZoomSign>
          <ZoomPct>70%</ZoomPct>
        </StatusBar>
      </Excel>

      <Taskbar>
        <StartBtn><WinLogo /></StartBtn>
        <SearchBox>
          <Cortana />
          <span>Type here to search</span>
          <Mic size={16} strokeWidth={1.6} />
        </SearchBox>
        <TaskIcon $w={46}><TaskViewIco /></TaskIcon>
        <TaskIcon $w={41} $ml={9} $run><FolderLogo /></TaskIcon>
        <TaskIcon $w={44} $ml={4} $run $on><ChromeLogo /></TaskIcon>
        <TaskIcon $w={40} $ml={8} $run><ExcelLogo /></TaskIcon>
        <Tray>
          <TrayIcon><PeopleIco /></TrayIcon>
          <TrayIcon $ml={20}><ChevronUp size={16} strokeWidth={1.5} /></TrayIcon>
          <TrayIcon $ml={10}><NetIco /></TrayIcon>
          <TrayIcon $ml={6}><SpeakerIco /></TrayIcon>
          <Clock>10:40 AM<br />1/8/2019</Clock>
          <TrayIcon $ml={14}><NoteIco /></TrayIcon>
        </Tray>
      </Taskbar>
    </Desktop>
  );
}
